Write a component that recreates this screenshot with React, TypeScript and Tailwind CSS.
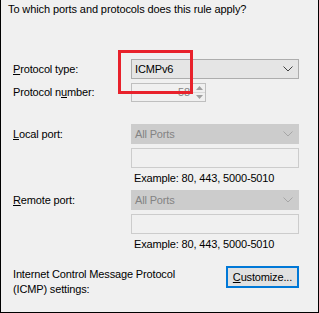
import type { ReactNode } from "react";

const FONT = { fontFamily: '"Segoe UI", "Liberation Sans", Arial, sans-serif' };

function Chevron({ disabled }: { disabled?: boolean }) {
  return (
    <svg width="10" height="6" viewBox="0 0 10 6" className="mr-[5px]">
      <path
        d="M0.5 0.5 L5 5 L9.5 0.5"
        fill="none"
        stroke={disabled ? "#a6a6a6" : "#404040"}
        strokeWidth="1"
      />
    </svg>
  );
}

function Combo({ value, disabled }: { value: string; disabled?: boolean }) {
  return (
    <div
      className={
        disabled
          ? "flex h-[20px] w-[168px] items-center justify-between border border-[#cccccc] bg-[#cccccc] pl-[3px] text-[#838383]"
          : "flex h-[20px] w-[168px] items-center justify-between border border-[#adadad] bg-[#e5e5e5] pl-[3px] text-[#000000]"
      }
    >
      <span>{value}</span>
      <Chevron disabled={disabled} />
    </div>
  );
}

function TextBox() {
  return <div className="h-[20px] w-[168px] border border-[#cccccc] bg-[#f0f0f0]" />;
}

function Row({ label, children, className }: { label?: ReactNode; children: ReactNode; className?: string }) {
  return (
    <div className={"flex items-center " + (className ?? "")}>
      <div className="w-[130px] shrink-0 pl-[12px]">{label}</div>
      {children}
    </div>
  );
}

export default function App() {
  return (
    <div
      className="relative h-[313px] w-[319px] border-x border-b border-black bg-[#f0f0f0] text-[11px] leading-[15px] tracking-[-0.15px] text-black"
      style={FONT}
    >
      <p className="pl-[7px] pt-[2px] tracking-[-0.1px]">To which ports and protocols does this rule apply?</p>

      <Row className="mt-[42px]" label={<span><u>P</u>rotocol type:</span>}>
        <Combo value="ICMPv6" />
      </Row>

      <Row className="mt-[4px]" label={<span>Protocol n<u>u</u>mber:</span>}>
        <div className="flex h-[19px] w-[75px] items-stretch border border-[#bfbfbf] bg-[#f0f0f0]">
          <div className="flex flex-1 items-center justify-end pr-[3px] text-[#838383]">58</div>
          <div className="flex w-[12px] flex-col">
            <div className="flex flex-1 items-center justify-center border-b border-[#d9d9d9]">
              <svg width="7" height="4" viewBox="0 0 7 4">
                <path d="M0 4 L3.5 0 L7 4 Z" fill="#a0a0a0" />
              </svg>
            </div>
            <div className="flex flex-1 items-center justify-center">
              <svg width="7" height="4" viewBox="0 0 7 4">
                <path d="M0 0 L3.5 4 L7 0 Z" fill="#a0a0a0" />
              </svg>
            </div>
          </div>
        </div>
      </Row>

      <Row className="mt-[22px]" label={<span><u>L</u>ocal port:</span>}>
        <Combo value="All Ports" disabled />
      </Row>
      <Row className="mt-[4px]">
        <TextBox />
      </Row>
      <Row className="mt-[3px]">
        <span className="pl-[3px]">Example: 80, 443, 5000-5010</span>
      </Row>

      <Row className="mt-[4px]" label={<span><u>R</u>emote port:</span>}>
        <Combo value="All Ports" disabled />
      </Row>
      <Row className="mt-[4px]">
        <TextBox />
      </Row>
      <Row className="mt-[3px]">
        <span className="pl-[3px]">Example: 80, 443, 5000-5010</span>
      </Row>

      <div className="mt-[14px] flex items-start">
        <div className="w-[225px] pl-[12px] pt-[1px]">
          Internet Control Message Protocol
          <br />
          (ICMP) settings:
        </div>
        <button className="h-[22px] w-[73px] border-2 border-[#0078d7] bg-[#e1e1e1] text-[11px] leading-[15px] text-black">
          <u>C</u>ustomize...
        </button>
      </div>

      {/* red highlight annotation */}
      <div className="pointer-events-none absolute left-[117px] top-[50px] h-[44px] w-[75px] border-[3px] border-[#e8212b]" />
    </div>
  );
}
